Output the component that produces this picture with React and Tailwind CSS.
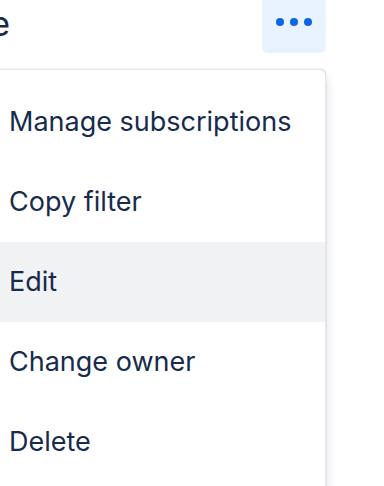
import React from 'react';

const items = ['Manage subscriptions', 'Copy filter', 'Edit', 'Change owner', 'Delete'];

const App = () => {
  return (
    <div className="w-[384px] h-[486px] bg-white overflow-hidden text-[#172b4d]" style={{ fontFamily: 'Inter, "Noto Sans", sans-serif' }}>
      {/* Header row */}
      <div className="flex items-start h-[53px]">
        <div className="w-[10px] overflow-hidden flex justify-end h-[53px] items-center">
          <span className="text-[34px] whitespace-nowrap leading-none pb-[6px]">Name</span>
        </div>
        <button className="ml-auto mr-[58px] w-[64px] h-[53px] bg-[#e9f2ff] rounded-b-[6px] flex items-center justify-center gap-[6px] pb-[10px]">
          <span className="w-[8px] h-[8px] rounded-full bg-[#0c66e4]" />
          <span className="w-[8px] h-[8px] rounded-full bg-[#0c66e4]" />
          <span className="w-[8px] h-[8px] rounded-full bg-[#0c66e4]" />
        </button>
      </div>

      {/* Dropdown menu */}
      <div className="mt-[16px] ml-[-22px] mr-[58px] bg-white rounded-[6px] border border-[#e4e5e8] shadow-[0_8px_12px_rgba(9,30,66,0.15),0_0_1px_rgba(9,30,66,0.31)] pt-[12px] pb-[12px]">
        {items.map((label) => (
          <div
            key={label}
            className={`h-[80px] flex items-center pl-[30px] text-[27px] ${label === 'Edit' ? 'bg-[#f1f2f4]' : ''}`}
          >
            {label}
          </div>
        ))}
      </div>
    </div>
  );
};

export default App;
